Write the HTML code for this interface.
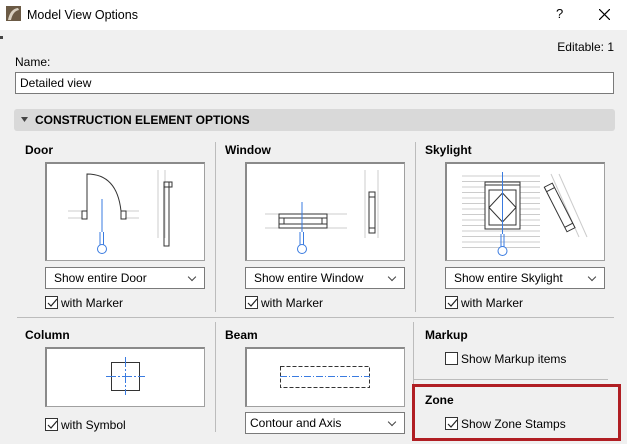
<!DOCTYPE html>
<html><head><style>
*{box-sizing:border-box;margin:0;padding:0}
body{width:627px;height:444px;overflow:hidden;background:#f0f0f0;font-family:"Liberation Sans",sans-serif;font-size:12px;color:#000;position:relative}
.a{position:absolute}
.t{position:absolute;white-space:nowrap;line-height:14px}
.b{font-weight:bold}
.prev{position:absolute;background:#fff;border:1px solid #a0a0a0;border-top:2px solid #8a8a8a;border-left:2px solid #8a8a8a}
.sel{position:absolute;background:#fff;border:1px solid #7a7a7a;height:22px;padding-left:8px;line-height:20px;white-space:nowrap}
.sel:after{content:"";position:absolute;right:9px;top:6px;width:5px;height:5px;border-right:1px solid #444;border-bottom:1px solid #444;transform:rotate(45deg)}
.cb{position:absolute;width:13px;height:13px;border:1px solid #333;background:#fff}
.cb svg{position:absolute;left:0;top:0}
</style></head><body>
<div class="a" style="left:0;top:0;width:627px;height:30px;background:#fff"></div>
<svg class="a" style="left:6px;top:6px" width="15" height="15"><rect width="15" height="15" fill="#6b5a45"/><path d="M2 14 Q4 3 12 2 L13 4 Q7 5 5 14Z" fill="#d8cfc0"/></svg>
<div class="t" style="left:27px;top:8px;font-size:12.5px">Model View Options</div>
<div class="t" style="left:556px;top:7px;font-size:13px">?</div>
<svg class="a" style="left:599px;top:9px" width="11" height="11"><path d="M0 0L11 11M11 0L0 11" stroke="#000" stroke-width="1.2"/></svg>
<div class="a" style="left:0;top:36px;width:3px;height:3px;background:#444"></div>
<div class="t" style="right:13px;top:40px">Editable: 1</div>
<div class="t" style="left:15px;top:55px">Name:</div>
<div class="a" style="left:15px;top:72px;width:599px;height:22px;background:#fff;border:1px solid #7a7a7a"></div>
<div class="t" style="left:20px;top:76px">Detailed view</div>
<div class="a" style="left:14px;top:109px;width:601px;height:22px;background:#d9d9d9;border-radius:3px"></div>
<svg class="a" style="left:21px;top:117px" width="8" height="6"><path d="M0 0H7L3.5 5Z" fill="#444"/></svg>
<div class="t b" style="left:35px;top:113px">CONSTRUCTION ELEMENT OPTIONS</div>

<div class="a" style="left:215px;top:142px;width:1px;height:170px;background:#bcbcbc"></div>
<div class="a" style="left:415px;top:142px;width:1px;height:170px;background:#bcbcbc"></div>
<div class="a" style="left:17px;top:317px;width:597px;height:1px;background:#bcbcbc"></div>
<div class="a" style="left:215px;top:322px;width:1px;height:110px;background:#bcbcbc"></div>
<div class="a" style="left:413px;top:322px;width:1px;height:110px;background:#bcbcbc"></div>
<div class="a" style="left:413px;top:379px;width:195px;height:1px;background:#bcbcbc"></div>

<!-- Door -->
<div class="t b" style="left:25px;top:143px">Door</div>
<div class="prev" style="left:45px;top:162px;width:160px;height:99px"></div>
<svg class="a" style="left:45px;top:162px" width="160" height="99" fill="none">
<path d="M23 49H37V56H23M23 56H37M80 49H94M80 56H94" stroke="#ccc"/>
<path d="M120 8V76M113 8V76" stroke="#ccc"/>
<rect x="37" y="49" width="5" height="8" stroke="#333"/>
<rect x="76" y="49" width="5" height="8" stroke="#333"/>
<path d="M42 49V12Q72 12 76 49" stroke="#333"/>
<rect x="119" y="20" width="5" height="64" stroke="#333"/>
<rect x="119" y="20" width="8" height="5" stroke="#333"/>
<path d="M57 37V70M55 70V83M58.5 70V83" stroke="#3a7be0"/>
<circle cx="57" cy="87" r="4.5" stroke="#3a7be0"/>
</svg>
<div class="sel" style="left:45px;top:267px;width:160px">Show entire Door</div>
<div class="cb" style="left:45px;top:296px"><svg width="13" height="13"><path d="M2 6L5 9L11 2" stroke="#222" fill="none" stroke-width="1.2"/></svg></div>
<div class="t" style="left:61px;top:296px">with Marker</div>

<!-- Window -->
<div class="t b" style="left:225px;top:143px">Window</div>
<div class="prev" style="left:245px;top:162px;width:160px;height:99px"></div>
<svg class="a" style="left:245px;top:162px" width="160" height="99" fill="none">
<path d="M20 52H102M20 66H102M120 8V76M133 8V76" stroke="#ccc"/>
<rect x="34" y="52" width="48" height="14" stroke="#333" fill="#fff"/>
<rect x="34" y="56" width="48" height="6" stroke="#333"/>
<path d="M39 56V62M77 56V62" stroke="#333"/>
<rect x="124" y="30" width="6" height="41" stroke="#333" fill="#fff"/>
<path d="M124 35H130M124 66H130" stroke="#333"/>
<path d="M57 40V70M55 70V83M58.5 70V83" stroke="#3a7be0"/>
<circle cx="57" cy="87" r="4.5" stroke="#3a7be0"/>
</svg>
<div class="sel" style="left:245px;top:267px;width:160px">Show entire Window</div>
<div class="cb" style="left:245px;top:296px"><svg width="13" height="13"><path d="M2 6L5 9L11 2" stroke="#222" fill="none" stroke-width="1.2"/></svg></div>
<div class="t" style="left:261px;top:296px">with Marker</div>

<!-- Skylight -->
<div class="t b" style="left:425px;top:143px">Skylight</div>
<div class="prev" style="left:445px;top:162px;width:160px;height:99px"></div>
<svg class="a" style="left:445px;top:162px" width="160" height="99" fill="none">
<path d="M17 14H95M17 19.5H95M17 25H95M17 30.5H95M17 36H95M17 41.5H95M17 47H95M17 52.5H95M17 58H95M17 63.5H95M17 69H95M17 74.5H95M17 80H95M17 85.5H95" stroke="#ccc"/>
<path d="M106 12L134 75M114 12L142 75" stroke="#ccc"/>
<rect x="40" y="20" width="35" height="47" stroke="#333" fill="#fff"/>
<path d="M40 23H75" stroke="#333"/>
<rect x="44" y="28" width="27" height="35" stroke="#333"/>
<path d="M57.5 31L71 45.5L57.5 60L44 45.5Z" stroke="#333"/>
<g transform="rotate(-27 116 47)"><rect x="111" y="20" width="9" height="50" stroke="#333" fill="#fff"/><path d="M111 25H120M111 65H120" stroke="#333"/></g>
<path d="M57.5 10V72M56 72V85M59 72V85" stroke="#3a7be0"/>
<circle cx="57.5" cy="89" r="4.5" stroke="#3a7be0" fill="#fff"/>
</svg>
<div class="sel" style="left:445px;top:267px;width:160px">Show entire Skylight</div>
<div class="cb" style="left:445px;top:296px"><svg width="13" height="13"><path d="M2 6L5 9L11 2" stroke="#222" fill="none" stroke-width="1.2"/></svg></div>
<div class="t" style="left:461px;top:296px">with Marker</div>

<!-- Column -->
<div class="t b" style="left:25px;top:328px">Column</div>
<div class="prev" style="left:45px;top:347px;width:160px;height:60px"></div>
<svg class="a" style="left:45px;top:347px" width="160" height="60" fill="none">
<rect x="66.5" y="15.5" width="28" height="28" stroke="#333"/>
<path d="M80.5 10V48M61 29.5H100" stroke="#3a7be0" stroke-dasharray="10 2 2 2"/>
</svg>
<div class="cb" style="left:45px;top:418px"><svg width="13" height="13"><path d="M2 6L5 9L11 2" stroke="#222" fill="none" stroke-width="1.2"/></svg></div>
<div class="t" style="left:61px;top:418px">with Symbol</div>

<!-- Beam -->
<div class="t b" style="left:225px;top:328px">Beam</div>
<div class="prev" style="left:245px;top:347px;width:160px;height:60px"></div>
<svg class="a" style="left:245px;top:347px" width="160" height="60" fill="none">
<rect x="35.5" y="19.5" width="89" height="21" stroke="#333" stroke-dasharray="4 2"/>
<path d="M35 29.5H125" stroke="#3a7be0" stroke-dasharray="7 2 1 2"/>
</svg>
<div class="sel" style="left:245px;top:412px;width:160px;height:22px;line-height:20px;padding-left:4px">Contour and Axis</div>

<!-- Markup -->
<div class="t b" style="left:425px;top:328px">Markup</div>
<div class="cb" style="left:445px;top:352px"></div>
<div class="t" style="left:461px;top:352px">Show Markup items</div>

<!-- Zone -->
<div class="a" style="left:412px;top:384px;width:209px;height:57px;border:3px solid #b01e23"></div>
<div class="t b" style="left:425px;top:393px">Zone</div>
<div class="cb" style="left:445px;top:417px"><svg width="13" height="13"><path d="M2 6L5 9L11 2" stroke="#222" fill="none" stroke-width="1.2"/></svg></div>
<div class="t" style="left:461px;top:417px">Show Zone Stamps</div>
</body></html>
